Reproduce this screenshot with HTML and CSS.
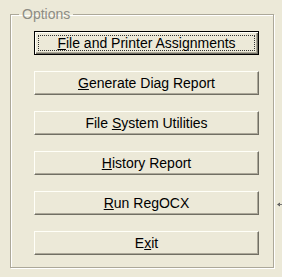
FILE: index.html
```html
<!DOCTYPE html>
<html lang="en">
<head>
    <meta charset="UTF-8">
    <title>Options</title>
    <link rel="stylesheet" href="styles.css">
</head>
<body>
    <div class="dialog">
        <fieldset class="group-box">
            <legend class="group-title">Options</legend>
            <div class="button-list">
                <button class="cmd-button focused"><span class="focus-rect"><u>F</u>ile and Printer Assignments</span></button>
                <button class="cmd-button"><u>G</u>enerate Diag Report</button>
                <button class="cmd-button">File <u>S</u>ystem Utilities</button>
                <button class="cmd-button"><u>H</u>istory Report</button>
                <button class="cmd-button"><u>R</u>un RegOCX</button>
                <button class="cmd-button">E<u>x</u>it</button>
            </div>
        </fieldset>
        <svg class="edge-mark" width="5" height="5" viewBox="0 0 5 5">
            <path d="M0 2.5 L3 0.5 L3 4.5 Z" fill="#555"/>
            <rect x="2" y="2" width="3" height="1" fill="#777"/>
        </svg>
    </div>
</body>
</html>
```

FILE: styles.css
```css
html, body {
    margin: 0;
    padding: 0;
    width: 100%;
    height: 100%;
    background-color: #ECE9D8;
    font-family: "Liberation Sans", Arial, sans-serif;
    font-size: 14px;
    color: #000;
    overflow: hidden;
}

.dialog {
    position: relative;
    width: 282px;
    height: 277px;
    padding-top: 7px;
    box-sizing: border-box;
}

.group-box {
    margin: 0 0 0 10px;
    width: 264px;
    height: 261px;
    box-sizing: border-box;
    padding: 0;
    border: 1px solid #ACA899;
    box-shadow: 1px 1px 0 #fff, inset 1px 1px 0 #fff;
}

.group-title {
    margin-left: 8px;
    padding: 0 3px;
    line-height: 15px;
    color: #8C8C84;
}

.button-list {
    display: flex;
    flex-direction: column;
    gap: 16px;
    padding: 9px 0 0 23px;
}

.cmd-button {
    width: 225px;
    height: 24px;
    margin: 0;
    padding: 0;
    font-family: inherit;
    font-size: 14px;
    color: #000;
    background-color: #ECE9D8;
    border: 1px solid;
    border-color: #FFFFF8 #716F64 #716F64 #FFFFF8;
    box-shadow: inset -1px -1px 0 #ACA899;
    border-radius: 0;
    text-align: center;
    cursor: pointer;
}

.cmd-button.focused {
    border-color: #000;
    box-shadow: inset 1px 1px 0 #FFFFF8, inset -1px -1px 0 #716F64, inset -2px -2px 0 #ACA899;
    padding: 3px;
}

.focus-rect {
    display: flex;
    align-items: center;
    justify-content: center;
    height: 100%;
    box-sizing: border-box;
    border: 1px dotted #333;
}

.edge-mark {
    position: absolute;
    left: 277px;
    top: 202px;
}
```
